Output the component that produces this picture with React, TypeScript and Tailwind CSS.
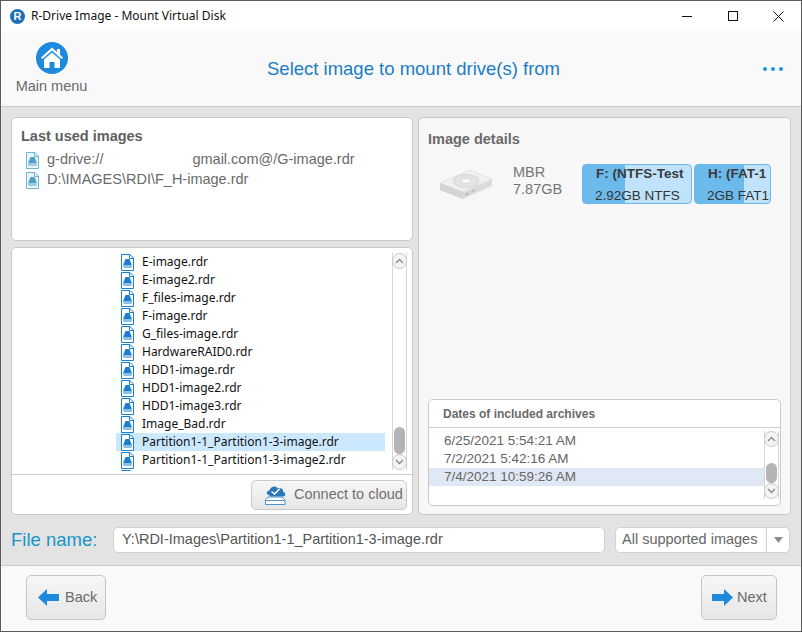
const FILES = [
  'E-image.rdr',
  'E-image2.rdr',
  'F_files-image.rdr',
  'F-image.rdr',
  'G_files-image.rdr',
  'HardwareRAID0.rdr',
  'HDD1-image.rdr',
  'HDD1-image2.rdr',
  'HDD1-image3.rdr',
  'Image_Bad.rdr',
  'Partition1-1_Partition1-3-image.rdr',
  'Partition1-1_Partition1-3-image2.rdr',
  '',
]

const DATES = ['6/25/2021 5:54:21 AM', '7/2/2021 5:42:16 AM', '7/4/2021 10:59:26 AM']

function ImageFileIcon({ light }: { light?: boolean }) {
  const stroke = light ? '#6fb9d6' : '#1b7fd0'
  const fill = light ? '#4f9fc4' : '#1b7fd0'
  return (
    <svg width="13" height="17" viewBox="0 0 13 17" className="shrink-0">
      <path d="M.5.5H9L12.5 4V16.5H.5Z" fill={light ? '#e8f5fa' : '#fff'} stroke={stroke} />
      <path d="M8.5.5V4.5H12.5" fill="none" stroke={stroke} />
      <path d="M4.5 5H8.5L10.5 10H2.5Z" fill={fill} />
      <rect x="2.5" y="10" width="8" height="3.5" fill={fill} />
      <rect x="3" y="11.5" width="7" height="1" fill="#fff" />
    </svg>
  )
}

function ScrollCircle({ up }: { up?: boolean }) {
  return (
    <div className="flex h-[16px] w-[15px] shrink-0 items-center justify-center rounded-full border border-[#c8c8c8] bg-[#f4f4f4]">
      <svg width="9" height="6" viewBox="0 0 9 6">
        <path d={up ? 'M1 5L4.5 1.5L8 5' : 'M1 1L4.5 4.5L8 1'} fill="none" stroke="#8a8a8a" strokeWidth="1.4" />
      </svg>
    </div>
  )
}

function Scrollbar({ before, after }: { before: number; after: number }) {
  return (
    <div className="flex h-full w-[15px] shrink-0 flex-col border-x border-[#d6d6d6]">
      <div className="-mx-px">
        <ScrollCircle up />
      </div>
      <div className="flex min-h-0 flex-1 flex-col px-px">
        <div style={{ flexGrow: before }} />
        <div style={{ flexGrow: after }} className="rounded-[7px] bg-[#b4b4b4]" />
      </div>
      <div className="-mx-px">
        <ScrollCircle />
      </div>
    </div>
  )
}

function DiskIcon() {
  return (
    <svg width="54" height="31" viewBox="0 0 54 31">
      <path d="M1 14L31 1L53 10V17L24 30L1 21Z" fill="#dcdcdc" />
      <path d="M1 14L24 23L53 10L31 1Z" fill="#f0f0f0" stroke="#dedede" strokeWidth=".6" />
      <path d="M1 14L24 23V30L1 21Z" fill="#d4d4d4" />
      <ellipse cx="27" cy="12" rx="13" ry="6.5" fill="#e3e3e3" stroke="#d0d0d0" strokeWidth=".7" />
      <ellipse cx="27" cy="12" rx="5" ry="2.5" fill="#f5f5f5" stroke="#d2d2d2" strokeWidth=".7" />
      <path d="M26 26L30 24M32 23L36 21" stroke="#bcbcbc" strokeWidth="1.4" />
    </svg>
  )
}

function CloudIcon() {
  return (
    <svg width="24" height="22" viewBox="0 0 24 22">
      <path d="M5 11C2 11 2 6.5 5.5 6.5C6.5 2 12 1 14 4.5C17.5 3.5 20 6 19 8C22 8.500 22 12 19.500 12.500H6Z" fill="#2a76b8" />
      <path d="M7.500 7.500L10.500 10L15.500 5" fill="none" stroke="#fff" strokeWidth="1.500" />
      <path d="M4 13H18L21 16V20.500H1.500V15.500Z" fill="#fff" stroke="#4b94cf" />
      <path d="M2 16.500H20.500" stroke="#4b94cf" />
    </svg>
  )
}

function NavButton({ label, back }: { label: string; back?: boolean }) {
  return (
    <div
      className={`flex h-[45px] items-center rounded-[5px] border border-[#c6c6c6] bg-linear-to-b from-[#f7f7f7] to-[#e6e6e6] text-[14.5px] text-[#6a6a6a] ${
        back ? 'w-[80px] pl-[11px]' : 'w-[76px] pl-[10px]'
      }`}
    >
      <svg width="22" height="17" viewBox="0 0 22 17" className={back ? 'mr-[5px]' : 'mr-[3px]'}>
        <path d={back ? 'M0 8.500L9 0V5H21V12H9V17Z' : 'M21 8.500L12 0V5H0V12H12V17Z'} fill="#1e8ade" />
      </svg>
      {label}
    </div>
  )
}

function Partition({ title, sub, fill, width }: { title: string; sub: string; fill: string; width: string }) {
  return (
    <div className={`flex h-[40px] flex-col justify-center overflow-hidden rounded-[4px] border border-[#6ab8ec] pl-[12px] text-[13.500px] whitespace-nowrap text-[#333] ${fill} ${width}`}>
      <div className="pb-[3px] pl-[1px] font-bold text-[#3a3a3a]">{title}</div>
      <div className="leading-[16px]">{sub}</div>
    </div>
  )
}

export default function App() {
  return (
    <div className="flex h-[632px] w-[802px] flex-col overflow-hidden border border-[#5c5c5c] bg-white font-['Liberation_Sans',sans-serif]">
      <div className="flex h-[30px] shrink-0 items-center bg-white">
        <div className="ml-[9px] flex h-[15px] w-[15px] items-center justify-center rounded-full bg-[#1d6fb8] text-[11px] leading-none font-bold text-white">
          R
        </div>
        <span className="ml-[6px] font-['Noto_Sans',sans-serif] text-[12px] text-[#111]">R-Drive Image - Mount Virtual Disk</span>
        <div className="ml-auto flex items-center">
          <svg width="10" height="10" viewBox="0 0 10 10" className="mr-[36px]">
            <path d="M0 5.500H10" stroke="#111" />
          </svg>
          <svg width="10" height="10" viewBox="0 0 10 10" className="mr-[35px]">
            <rect x=".5" y=".5" width="9" height="9" fill="none" stroke="#111" />
          </svg>
          <svg width="11" height="11" viewBox="0 0 11 11" className="mr-[17px]">
            <path d="M.5.5L10.500 10.500M10.500.5L.5 10.500" stroke="#111" />
          </svg>
        </div>
      </div>

      <div className="relative flex h-[76px] shrink-0 items-center border-b border-[#c9c9c9] bg-[#f9f9f9]">
        <div className="ml-[15px] flex w-[71px] flex-col items-center">
          <svg width="32" height="32" viewBox="0 0 32 32" className="mt-[3px]">
            <circle cx="16" cy="16" r="16" fill="#1e8ade" />
            <path d="M16 5.500L21 10V7H24V12.700L27 15.500L25.500 17L16 8.500L6.500 17L5 15.500Z" fill="#fff" />
            <path d="M16 10.500L24 17.500V26H18.500V20H13.500V26H8V17.500Z" fill="#fff" />
          </svg>
          <span className="mt-[2px] text-[14.500px] whitespace-nowrap text-[#6b6b6b]">Main menu</span>
        </div>
        <div className="ml-[180px] w-[315px] text-[18.500px] whitespace-nowrap text-[#1c7cc4]">Select image to mount drive(s) from</div>
        <div className="ml-auto mr-[18px] flex gap-[4px]">
          <span className="h-[4px] w-[4px] rounded-full bg-[#1e96e8]" />
          <span className="h-[4px] w-[4px] rounded-full bg-[#1e96e8]" />
          <span className="h-[4px] w-[4px] rounded-full bg-[#1e96e8]" />
        </div>
      </div>

      <div className="flex h-[458px] shrink-0 flex-col bg-[#e3e3e3] pt-[10px] pl-[10px]">
        <div className="flex h-[398px] gap-[5px]">
          <div className="flex w-[402px] flex-col gap-[6px]">
            <div className="h-[124px] rounded-[5px] border border-[#c9c9c9] bg-white pt-[10px] pl-[9px]">
              <div className="text-[14.500px] leading-[16px] font-bold text-[#5f5f5f]">Last used images</div>
              <div className="mt-[6px] ml-[5px] text-[14.500px] text-[#6a6a6a]">
                <div className="flex h-[20px] items-center gap-[8px]">
                  <ImageFileIcon light />
                  <span>g-drive://</span>
                  <span className="ml-[81px]">gmail.com@/G-image.rdr</span>
                </div>
                <div className="flex h-[20px] items-center gap-[8px]">
                  <ImageFileIcon light />
                  <span>D:\IMAGES\RDI\F_H-image.rdr</span>
                </div>
              </div>
            </div>
            <div className="flex h-[268px] flex-col rounded-[5px] border border-[#c9c9c9] bg-white">
              <div className="flex h-[227px] border-b border-[#cfcfcf] pt-[5px] pb-[4px] pl-[104px]">
                <div className="h-[218px] w-[269px] overflow-hidden font-['Noto_Sans',sans-serif] text-[12px] text-[#111]">
                  {FILES.map((name, i) => (
                    <div key={i} className={`flex h-[18px] items-center gap-[8px] pl-[5px] whitespace-nowrap ${i === 10 ? 'bg-[#cce8ff]' : ''}`}>
                      <ImageFileIcon />
                      {name}
                    </div>
                  ))}
                </div>
                <div className="ml-[7px]">
                  <Scrollbar before={131} after={22} />
                </div>
              </div>
              <div className="flex flex-1 items-center justify-end pr-[5px]">
                <div className="flex h-[30px] w-[156px] items-center gap-[6px] rounded-[5px] border border-[#c9c9c9] bg-linear-to-b from-[#f7f7f7] to-[#e6e6e6] pl-[12px] text-[14.500px] text-[#707070]">
                  <CloudIcon />
                  Connect to cloud
                </div>
              </div>
            </div>
          </div>

          <div className="flex w-[373px] flex-col rounded-[5px] border border-[#c9c9c9] bg-[#f7f7f7] pl-[9px]">
            <div className="mt-[13px] text-[14.500px] leading-[16px] font-bold text-[#6a6a6a]">Image details</div>
            <div className="mt-[17px] flex h-[40px] items-center">
              <div className="ml-[11px] w-[74px]">
                <DiskIcon />
              </div>
              <div className="w-[69px] self-start text-[14.500px] leading-[17px] text-[#757575]">
                <div>MBR</div>
                <div>7.87GB</div>
              </div>
              <div className="flex gap-[2px]">
                <Partition title="F: (NTFS-Test" sub="2.92GB NTFS" width="w-[110px]" fill="bg-[linear-gradient(90deg,#6cb9ec_39%,#c0e3fb_39%)]" />
                <Partition title="H: (FAT-1" sub="2GB FAT1" width="w-[77px]" fill="bg-[linear-gradient(90deg,#6cb9ec_65%,#c0e3fb_65%)]" />
              </div>
            </div>
            <div className="mt-[195px] h-[107px] w-[353px] rounded-[5px] border border-[#c9c9c9] bg-white">
              <div className="flex h-[28px] items-center border-b border-[#cfcfcf] pl-[14px] text-[12px] font-bold text-[#6a6a6a]">
                Dates of included archives
              </div>
              <div className="flex h-[77px] pt-[3px] pb-[6px]">
                <div className="w-[335px] pt-px text-[13.500px] text-[#666]">
                  {DATES.map((date, i) => (
                    <div key={date} className={`flex h-[18px] items-center pl-[15px] ${i === 2 ? 'bg-[#e1e8f5]' : ''}`}>
                      {date}
                    </div>
                  ))}
                </div>
                <Scrollbar before={21} after={25} />
              </div>
            </div>
          </div>
        </div>

        <div className="mt-[12px] flex h-[26px] items-center">
          <span className="w-[102px] text-[18.500px] text-[#1a94c8]">File name:</span>
          <div className="flex h-[26px] w-[492px] items-center rounded-[5px] border border-[#d2d2d2] bg-white pl-[8px] text-[14.500px] text-[#555]">
            Y:\RDI-Images\Partition1-1_Partition1-3-image.rdr
          </div>
          <div className="ml-[10px] flex h-[26px] w-[175px] items-center rounded-[5px] border border-[#d2d2d2] bg-white text-[14.500px] text-[#666]">
            <span className="w-[150px] pl-[6px] whitespace-nowrap">All supported images</span>
            <div className="flex h-full flex-1 items-center justify-center border-l border-[#d2d2d2]">
              <svg width="9" height="6" viewBox="0 0 9 6">
                <path d="M0 0H9L4.500 6Z" fill="#8e8e8e" />
              </svg>
            </div>
          </div>
        </div>
      </div>

      <div className="flex flex-1 items-start justify-between border-t border-[#c9c9c9] bg-[#f9f9f9] pt-[9px] pr-[24px] pl-[25px]">
        <NavButton label="Back" back />
        <NavButton label="Next" />
      </div>
    </div>
  )
}
